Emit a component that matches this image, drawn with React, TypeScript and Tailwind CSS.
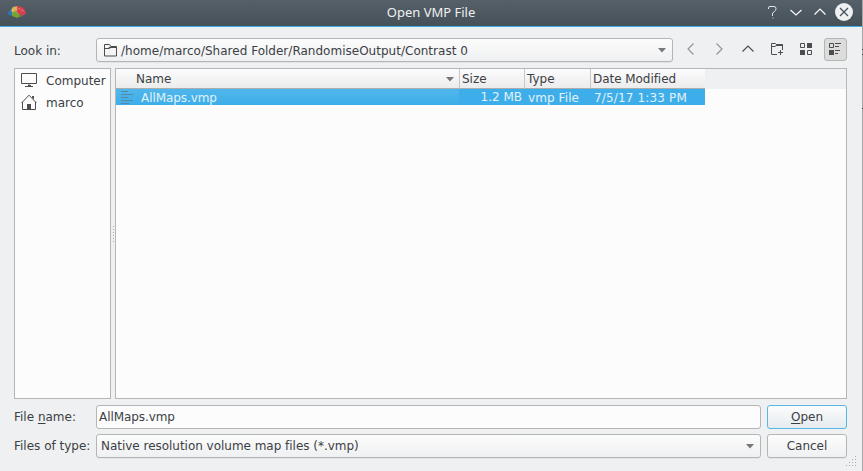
import type { ReactNode } from "react";

const ink = "#3b4045";
const iconInk = "#4d4d4d";

function BrainLogo() {
  return (
    <svg width="20" height="14" viewBox="0 0 20 14">
      <path d="M1 9 2 6l3-1 1 6-4-1z" fill="#2d75bd" />
      <path d="M4 5 6 2l5-1 1 4-6 4z" fill="#d5b65b" />
      <path d="M5 8 9 5l4 3 1 3-4 2-5-2z" fill="#70a72f" />
      <path d="M10 1 15 2l3 3 1 4-5 2-4-4z" fill="#dc3d50" />
      <path d="m14 9 2 1-1 2-3-1z" fill="#82645d" />
      <path d="m8 3 2 2 2-2 2 2 3 1M5 6l2 1 2-1 2 3" fill="none" stroke="#f0a078" strokeWidth=".5" />
    </svg>
  );
}

function Chevron({ points, color = iconInk }: { points: string; color?: string }) {
  return (
    <svg width="16" height="16" viewBox="0 0 16 16">
      <polyline points={points} fill="none" stroke={color} strokeWidth="1.15" />
    </svg>
  );
}

function DownArrow() {
  return (
    <svg width="8" height="5" viewBox="0 0 8 5" className="shrink-0">
      <path d="M0 0h8L4 4.6z" fill="#74787c" />
    </svg>
  );
}

function Combo({ className, children }: { className: string; children: ReactNode }) {
  return (
    <div
      className={`flex h-6 items-center rounded-[3px] border border-[#b3b5b6] bg-linear-to-b from-[#fcfcfc] to-[#eff0f1] pr-[6px] shadow-[0_1px_0_#e3e4e5] ${className}`}
    >
      {children}
      <span className="ml-auto pt-px"><DownArrow /></span>
    </div>
  );
}

function HeaderCell({ className, children }: { className: string; children: ReactNode }) {
  return (
    <div className={`flex h-full items-center border-b border-r-[#c6c8c9] border-b-[#aaacad] bg-linear-to-b from-[#fcfcfc] to-[#ececed] pt-px ${className}`}>
      {children}
    </div>
  );
}

export default function App() {
  return (
    <div className="flex h-[471px] w-[863px] overflow-hidden bg-[#eff0f1] font-['DejaVu_Sans',sans-serif] text-[12px] leading-[16px] whitespace-nowrap" style={{ color: ink }}>
      <div className="flex h-full w-[862px] flex-col">
        <header className="grid h-[27px] shrink-0 grid-cols-[1fr_auto_1fr] border-b border-[#3daee9] bg-linear-to-b from-[#566069] to-[#465057] text-[#eff0f1]">
          <div className="pt-[5px] pl-[7px]"><BrainLogo /></div>
          <h1 className="pt-[3px] font-['Noto_Sans',sans-serif] text-[13px] leading-[18px]">Open VMP File</h1>
          <div className="flex items-start justify-end gap-2 pt-[4px] pr-[9px]">
            <svg width="16" height="16" viewBox="0 0 16 16" className="-mr-px">
              <path d="M4.5 5V4Q4.5 2.5 6 2.5h4q2 0 2 2t-1.5 3L8.5 9v3" fill="none" stroke="#e4e6e8" strokeWidth="1" />
              <path d="M8 14h1.5" stroke="#a5aaad" />
            </svg>
            <Chevron points="3.5,6 9,11 14.5,6" color="#fcfcfc" />
            <Chevron points="3.5,10.5 9,5 14.5,10.5" color="#fcfcfc" />
            <svg width="18" height="18" viewBox="0 0 18 18" className="-mt-px">
              <circle cx="9" cy="9" r="9" fill="#eff0f1" />
              <path d="m5 5 8 8m0-8-8 8" stroke="#465057" strokeWidth="1.2" />
            </svg>
          </div>
        </header>

        <div className="flex h-[41px] shrink-0 items-start pt-[11px] pl-[14px]">
          <span className="w-[82px] pt-[5px]">Look in:</span>
          <Combo className="w-[577px] pl-[7px]">
            <svg width="13" height="13" viewBox="0 0 13 13" className="mr-[4px]">
              <path d="M.5 12V.5h5l1.5 2h5.5V12z" fill="none" stroke={iconInk} />
              <path d="M1 4h3l2-1.5h6.5V4H7L5 5H1z" fill={iconInk} />
            </svg>
            <span className="pt-[2px] tracking-[0.015px]">/home/marco/Shared Folder/RandomiseOutput/Contrast 0</span>
          </Combo>
          <div className="flex items-start pl-[10px]">
            <div className="flex gap-[13px] pt-[3px]">
              <Chevron points="10.5,2.5 5,8 10.5,13.5" color="#929495" />
              <Chevron points="4.5,2.5 10,8 4.5,13.5" color="#929495" />
              <Chevron points="1.5,10.5 7,5 12.5,10.5" />
            </div>
            <svg width="16" height="16" viewBox="0 0 16 16" className="mt-[3px] ml-[12px]">
              <path d="M2.5 13V2.5h4l1 1h6V9M2.5 13.5H8" fill="none" stroke={iconInk} />
              <path d="M3 5h3l2-2h5.5v2H7L6 6H3z" fill={iconInk} />
              <path d="M9 11.5h5m-2.5-2.5v5" stroke={iconInk} />
            </svg>
            <svg width="16" height="16" viewBox="0 0 16 16" className="mt-[3px] ml-[13px]">
              <path d="M2.5 2.5h4v4h-4zM9.5 9.5h4v4h-4z" fill="none" stroke={iconInk} />
              <path d="M9 2h5v5H9zM2 9h5v5H2z" fill={iconInk} />
            </svg>
            <div className="ml-[10px] flex h-[23px] w-[23px] items-start justify-start rounded-[3px] border border-[#b3b5b6] bg-[#dcdcdd] pt-[2px] pl-[2px]">
              <svg width="16" height="16" viewBox="0 0 16 16">
                <path d="M2.5 2.5h4v4h-4z" fill="none" stroke={iconInk} />
                <path d="M2 9h5v5H2z" fill={iconInk} />
                <path d="M8 2.5h6M8 5.5h4M8 9.5h5M8 12.5h3" stroke={iconInk} />
              </svg>
            </div>
          </div>
        </div>

        <main className="flex h-[331px] shrink-0 pl-[14px]">
          <aside className="h-full w-[97px] border border-[#b4b6b7] bg-[#fcfcfc] pl-[6px]">
            <div className="flex h-[22px] items-center gap-[9px]">
              <svg width="16" height="16" viewBox="0 0 16 16" className="shrink-0">
                <path d="M.5 1.5h15v10H.5zM8 12v2" fill="none" stroke={iconInk} />
                <path d="M4 14.5h8M7 13.5h3" stroke={iconInk} />
              </svg>
              <span className="pt-[2px]">Computer</span>
            </div>
            <div className="flex h-[22px] items-center gap-[9px]">
              <svg width="16" height="16" viewBox="0 0 16 16" className="shrink-0">
                <path d="M.5 9 8 1.2 15.5 9M1.5 8v7.5h13V8" fill="none" stroke={iconInk} />
                <path d="M6 10h4v5H6zM11 2h2v3.5l-2-2z" fill={iconInk} />
              </svg>
              <span className="pt-[2px]">marco</span>
            </div>
          </aside>
          <div className="flex w-1 flex-col items-center justify-center gap-[2px]">
            {[0, 1, 2, 3, 4, 5].map((dot) => <span key={dot} className="size-px bg-[#a9abad]" />)}
          </div>
          <section className="h-full w-[732px] border border-[#b4b6b7] bg-[#fcfcfc]">
            <div className="flex h-5 bg-[#eff0f1]">
              <HeaderCell className="w-[344px] justify-between border-r pr-[5px] pl-5"><span>Name</span><DownArrow /></HeaderCell>
              <HeaderCell className="w-[65px] border-r pl-[2px]">Size</HeaderCell>
              <HeaderCell className="w-[66px] border-r pl-[2px]">Type</HeaderCell>
              <HeaderCell className="w-[114px] pl-[2px] tracking-[-0.05px]">Date Modified</HeaderCell>
            </div>
            <div className="flex h-4 w-[589px] bg-[#3daee9] text-[#e4f1f8]">
              <div className="flex w-[343px] items-center bg-linear-to-b from-[#50b6eb] to-[#3daee9]">
                <svg width="16" height="16" viewBox="0 0 16 16" className="ml-[3px] shrink-0">
                  <path d="M2 2.5h7M2 5.5h12M2 8.5h7M2 11.5h12M2 14.5h8" stroke="#5489aa" />
                </svg>
                <span className="pt-[2px] pl-[6px] tracking-[-0.07px]">AllMaps.vmp</span>
              </div>
              <span className="w-[63px] text-right">1.2 MB</span>
              <span className="w-[66px] pt-px pl-[6px] tracking-[0.1px]">vmp File</span>
              <span className="pt-px pl-[6px] tracking-[0.15px]">7/5/17 1:33 PM</span>
            </div>
          </section>
        </main>

        <footer className="relative flex flex-1 flex-col gap-[5px] pt-[6px] pl-[14px]">
          <div className="flex h-6 items-center">
            <span className="w-[82px]">File <u className="underline-offset-2">n</u>ame:</span>
            <div className="flex h-6 w-[665px] items-center rounded-[3px] border border-[#b3b5b6] bg-[#fcfcfc] pl-[2px] tracking-[-0.07px]">AllMaps.vmp</div>
            <button className="ml-[6px] h-6 w-20 rounded-[3px] border border-[#58b7e9] bg-linear-to-b from-[#fcfcfc] to-[#e5ebef]"><u className="underline-offset-2">O</u>pen</button>
          </div>
          <div className="flex h-6 items-center">
            <span className="w-[82px]">Files of type:</span>
            <Combo className="w-[665px] pl-[4px]"><span className="tracking-[-0.025px]">Native resolution volume map files (*.vmp)</span></Combo>
            <button className="ml-[6px] h-6 w-20 rounded-[3px] border border-[#b3b5b6] bg-linear-to-b from-[#fcfcfc] to-[#eff0f1] shadow-[0_1px_0_#e3e4e5]">Cancel</button>
          </div>
          <svg width="11" height="11" viewBox="0 0 11 11" className="absolute right-[5px] bottom-[4px]">
            <path d="M9 0h1v1H9zM6 3h1v1H6zM9 3h1v1H9zM3 6h1v1H3zM6 6h1v1H6zM9 6h1v1H9zM0 9h1v1H0zM3 9h1v1H3zM6 9h1v1H6zM9 9h1v1H9z" fill="#a9abad" />
          </svg>
        </footer>
      </div>
      <div className="flex h-full w-px flex-col bg-[#a5a8aa]">
        <div className="mt-[49px] h-px bg-[#33373a]" />
        <div className="mt-[4px] h-px bg-[#33373a]" />
        <div className="mt-[53px] h-px bg-[#33373a]" />
      </div>
    </div>
  );
}
